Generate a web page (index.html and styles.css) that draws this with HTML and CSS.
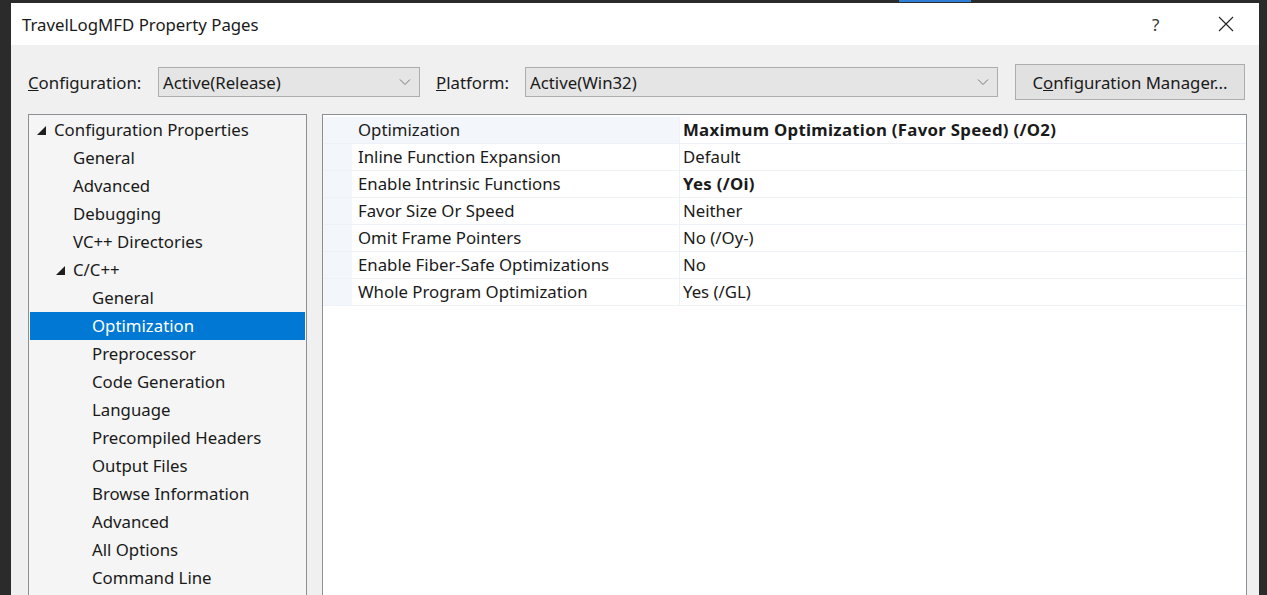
FILE: index.html
```html
<!DOCTYPE html>
<html>

<head>
    <title>TravelLogMFD Property Pages</title>
    <link rel="stylesheet" href="styles.css">
</head>

<body>
    <div class="topline"></div>
    <div class="dialog">
        <div class="titlebar">
            <span class="title">TravelLogMFD Property Pages</span>
            <span class="help">?</span>
            <svg class="close" width="16" height="16" viewBox="0 0 16 16">
                <path d="M1 1 L15 15 M15 1 L1 15" stroke="#222" stroke-width="1.1" fill="none" />
            </svg>
        </div>

        <div class="toolbar">
            <label class="lbl"><u>C</u>onfiguration:</label>
            <div class="combo combo-config">
                <span>Active(Release)</span>
                <svg width="12" height="8" viewBox="0 0 12 8"><path d="M1 1.5 L6 6.5 L11 1.5" stroke="#777" fill="none" /></svg>
            </div>
            <label class="lbl lbl-platform"><u>P</u>latform:</label>
            <div class="combo combo-platform">
                <span>Active(Win32)</span>
                <svg width="12" height="8" viewBox="0 0 12 8"><path d="M1 1.5 L6 6.5 L11 1.5" stroke="#777" fill="none" /></svg>
            </div>
            <button class="btn">C<u>o</u>nfiguration Manager...</button>
        </div>

        <div class="main">
            <ul class="tree">
                <li class="lvl0"><span class="arrow"></span>Configuration Properties</li>
                <li class="lvl1">General</li>
                <li class="lvl1">Advanced</li>
                <li class="lvl1">Debugging</li>
                <li class="lvl1">VC++ Directories</li>
                <li class="lvl1 open"><span class="arrow"></span>C/C++</li>
                <li class="lvl2">General</li>
                <li class="lvl2 selected">Optimization</li>
                <li class="lvl2">Preprocessor</li>
                <li class="lvl2">Code Generation</li>
                <li class="lvl2">Language</li>
                <li class="lvl2">Precompiled Headers</li>
                <li class="lvl2">Output Files</li>
                <li class="lvl2">Browse Information</li>
                <li class="lvl2">Advanced</li>
                <li class="lvl2">All Options</li>
                <li class="lvl2">Command Line</li>
            </ul>

            <div class="grid">
                <div class="row current">
                    <div class="name">Optimization</div>
                    <div class="value bold">Maximum Optimization (Favor Speed) (/O2)</div>
                </div>
                <div class="row">
                    <div class="name">Inline Function Expansion</div>
                    <div class="value">Default</div>
                </div>
                <div class="row">
                    <div class="name">Enable Intrinsic Functions</div>
                    <div class="value bold">Yes (/Oi)</div>
                </div>
                <div class="row">
                    <div class="name">Favor Size Or Speed</div>
                    <div class="value">Neither</div>
                </div>
                <div class="row">
                    <div class="name">Omit Frame Pointers</div>
                    <div class="value">No (/Oy-)</div>
                </div>
                <div class="row">
                    <div class="name">Enable Fiber-Safe Optimizations</div>
                    <div class="value">No</div>
                </div>
                <div class="row">
                    <div class="name">Whole Program Optimization</div>
                    <div class="value">Yes (/GL)</div>
                </div>
            </div>
        </div>
    </div>
</body>

</html>
```

FILE: styles.css
```css
html,
body {
    margin: 0;
    padding: 0;
    height: 100%;
}

body {
    background-color: #2b2b2b;
    font-family: "Noto Sans", "Open Sans", sans-serif;
    font-size: 16.8px;
    color: #1a1a1a;
    overflow: hidden;
    position: relative;
}

.topline {
    position: absolute;
    left: 899px;
    top: 0;
    width: 72px;
    height: 2px;
    background-color: #2f7fd8;
}

.dialog {
    margin-left: 11px;
    margin-top: 3px;
    width: 1248px;
    height: 592px;
    background-color: #f0f0f0;
}

.titlebar {
    height: 42px;
    background-color: #fff;
    display: flex;
    align-items: center;
}

.title {
    padding-left: 11px;
    flex: 1;
}

.help {
    width: 20px;
    margin-right: 46px;
    font-size: 17px;
    color: #333;
}

.close {
    margin-right: 25px;
}

.toolbar {
    display: flex;
    align-items: center;
    padding: 19px 13px 0 17px;
    height: 36px;
}

.lbl {
    width: 130px;
}

.lbl-platform {
    margin-left: 16px;
    width: 89px;
}

.combo {
    height: 30px;
    box-sizing: border-box;
    background-color: #e5e5e5;
    border: 1px solid #adadad;
    display: flex;
    align-items: center;
    justify-content: space-between;
    padding: 0 8px 0 4px;
}

.combo-config {
    width: 262px;
}

.combo-platform {
    width: 473px;
}

.btn {
    margin-left: 17px;
    width: 230px;
    height: 36px;
    background-color: #e1e1e1;
    border: 1px solid #adadad;
    font-family: inherit;
    font-size: 16.8px;
    color: #1a1a1a;
    padding: 0;
}

.main {
    display: flex;
    gap: 15px;
    padding: 14px 12px 0 17px;
}

.tree {
    list-style-type: none;
    margin: 0;
    width: 279px;
    height: 500px;
    box-sizing: border-box;
    padding: 1px;
    border: 1px solid #8c8f94;
    background-color: #f5f5f5;
}

.tree li {
    height: 28px;
    line-height: 28px;
    white-space: nowrap;
}

.tree .lvl0 {
    padding-left: 23px;
}

.tree .lvl1 {
    padding-left: 43px;
}

.tree .lvl1.open {
    padding-left: 28px;
}

.tree .lvl2 {
    padding-left: 62px;
}

.tree .selected {
    background-color: #0078d4;
    color: #fff;
}

.arrow {
    display: inline-block;
    width: 0;
    height: 0;
    border-left: 9px solid transparent;
    border-bottom: 9px solid #1e1e1e;
    margin-right: 8px;
    vertical-align: 1px;
}

.lvl0 .arrow {
    margin-left: -16px;
}

.lvl1.open .arrow {
    margin-left: -2px;
}

.grid {
    flex: 1;
    height: 500px;
    box-sizing: border-box;
    border: 1px solid #8c8f94;
    background-color: #fff;
    padding-top: 2px;
}

.row {
    display: flex;
    height: 27px;
    box-sizing: border-box;
    border-bottom: 1px solid #eef2f8;
    padding-left: 29px;
    background-color: #f3f6fb;
}

.name {
    width: 328px;
    box-sizing: border-box;
    padding-left: 6px;
    line-height: 26px;
    background-color: #fff;
    border-right: 1px solid #eef2f8;
    white-space: nowrap;
}

.current .name {
    background-color: #f3f6fb;
}

.value {
    flex: 1;
    padding-left: 3px;
    line-height: 26px;
    background-color: #fff;
    white-space: nowrap;
}

.bold {
    font-weight: bold;
    letter-spacing: 0.3px;
}
```
